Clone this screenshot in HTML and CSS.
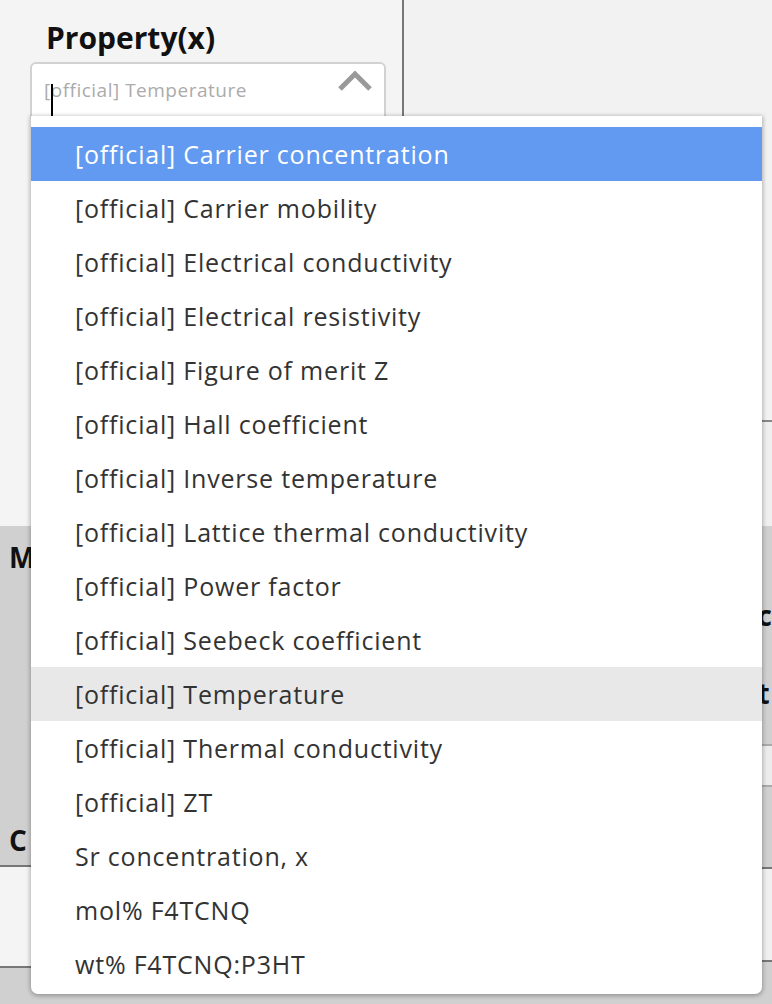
FILE: index.html
```html
<!DOCTYPE html>
<html>
<head>
<meta charset="utf-8">
<link rel="stylesheet" href="styles.css">
</head>
<body>
<div class="page">
  <div class="top">
    <div class="left-panel">
      <h2 class="label">Property(x)</h2>
      <div class="select">
        <span class="caret"></span>
        <span class="placeholder">[official] Temperature</span>
        <svg class="chevron" width="34" height="22" viewBox="0 0 34 22"><polyline points="2,19 17,4 32,19" fill="none" stroke="#999" stroke-width="5"/></svg>
      </div>
    </div>
    <div class="right-panel">
      <div class="rp-box"></div>
    </div>
  </div>
  <div class="band">
    <div class="band-left">
      <div class="band-title">M</div>
      <div class="band-title c-title">C</div>
      <div class="light-box"></div>
    </div>
    <div class="band-right">
      <div class="band-word c-word">c</div>
      <div class="band-word t-word">t</div>
      <div class="light-strip"></div>
      <div class="gray-gap"></div>
      <div class="light-box2"></div>
    </div>
  </div>
  <ul class="menu">
    <li class="item active">[official] Carrier concentration</li>
    <li class="item">[official] Carrier mobility</li>
    <li class="item">[official] Electrical conductivity</li>
    <li class="item">[official] Electrical resistivity</li>
    <li class="item">[official] Figure of merit Z</li>
    <li class="item">[official] Hall coefficient</li>
    <li class="item">[official] Inverse temperature</li>
    <li class="item">[official] Lattice thermal conductivity</li>
    <li class="item">[official] Power factor</li>
    <li class="item">[official] Seebeck coefficient</li>
    <li class="item selected">[official] Temperature</li>
    <li class="item">[official] Thermal conductivity</li>
    <li class="item">[official] ZT</li>
    <li class="item">Sr concentration, x</li>
    <li class="item">mol% F4TCNQ</li>
    <li class="item">wt% F4TCNQ:P3HT</li>
  </ul>
</div>
</body>
</html>
```
FILE: styles.css
```css
html, body {
  margin: 0;
  padding: 0;
}
body {
  font-family: "Open Sans", Lato, sans-serif;
  width: 772px;
  height: 1004px;
  overflow: hidden;
  background: #d0d0d0;
}
.page {
  position: relative;
  width: 772px;
  height: 1004px;
  overflow: hidden;
}
.top {
  display: flex;
  height: 526px;
}
.left-panel {
  width: 404px;
  background: #f4f4f4;
  border-right: 2px solid #777;
  padding: 19px 0 0 30px;
  box-sizing: border-box;
}
.label {
  margin: 0 0 5px 16px;
  font-size: 30px;
  font-weight: 700;
  color: #111;
  line-height: 38px;
}
.select {
  position: relative;
  width: 356px;
  height: 60px;
  box-sizing: border-box;
  border: 2px solid #d2d2d2;
  border-radius: 6px;
  background: #fff;
  display: flex;
  align-items: flex-start;
  padding: 13px 0 0 12px;
}
.placeholder {
  font-size: 19px;
  color: #ababab;
  line-height: 26px;
  letter-spacing: 0.5px;
}
.caret {
  position: absolute;
  left: 19px;
  top: 20px;
  width: 2px;
  height: 40px;
  background: #000;
}
.chevron {
  position: absolute;
  right: 12px;
  top: 6px;
}
.right-panel {
  flex: 1;
  display: flex;
  flex-direction: column;
  background: #efefef;
}
.rp-box {
  height: 420px;
  background: #f2f2f2;
  border-bottom: 2px solid #888;
}
.band {
  display: flex;
  height: 478px;
  background: #d0d0d0;
}
.band-left {
  width: 406px;
  display: flex;
  flex-direction: column;
  padding-left: 9px;
  box-sizing: border-box;
}
.band-title {
  font-size: 28px;
  font-weight: 700;
  color: #111;
  line-height: 34px;
  margin-top: 14px;
}
.c-title {
  margin-top: 249px;
}
.light-box {
  margin-top: 8px;
  margin-left: -9px;
  height: 99px;
  background: #f4f4f4;
  border-top: 2px solid #777;
  border-bottom: 2px solid #777;
}
.band-right {
  flex: 1;
  display: flex;
  flex-direction: column;
  padding-left: 357px;
}
.band-word {
  font-size: 28px;
  font-weight: 700;
  color: #111;
  line-height: 34px;
}
.c-word {
  margin-top: 72px;
}
.t-word {
  margin-top: 44px;
}
.light-strip {
  margin-top: 34px;
  margin-left: -357px;
  height: 39px;
  background: #ececec;
  border-top: 2px solid #aaa;
  border-bottom: 2px solid #aaa;
}
.gray-gap {
  height: 80px;
}
.light-box2 {
  margin-left: -357px;
  height: 91px;
  background: #f0f0f0;
  border-top: 2px solid #777;
  border-bottom: 2px solid #777;
}
.menu {
  position: absolute;
  left: 31px;
  top: 116px;
  width: 731px;
  margin: 0;
  padding: 11px 0 3px 0;
  list-style: none;
  background: #fff;
  border-radius: 0 0 7px 7px;
  box-shadow: 0 1px 4px 1px rgba(0, 0, 0, 0.28);
}
.item {
  height: 54px;
  line-height: 54px;
  padding-left: 44px;
  font-size: 25px;
  letter-spacing: 0.8px;
  color: #333;
  white-space: nowrap;
}
.item.active {
  background: #619af0;
  color: #fff;
}
.item.selected {
  background: #e8e8e8;
}
```
